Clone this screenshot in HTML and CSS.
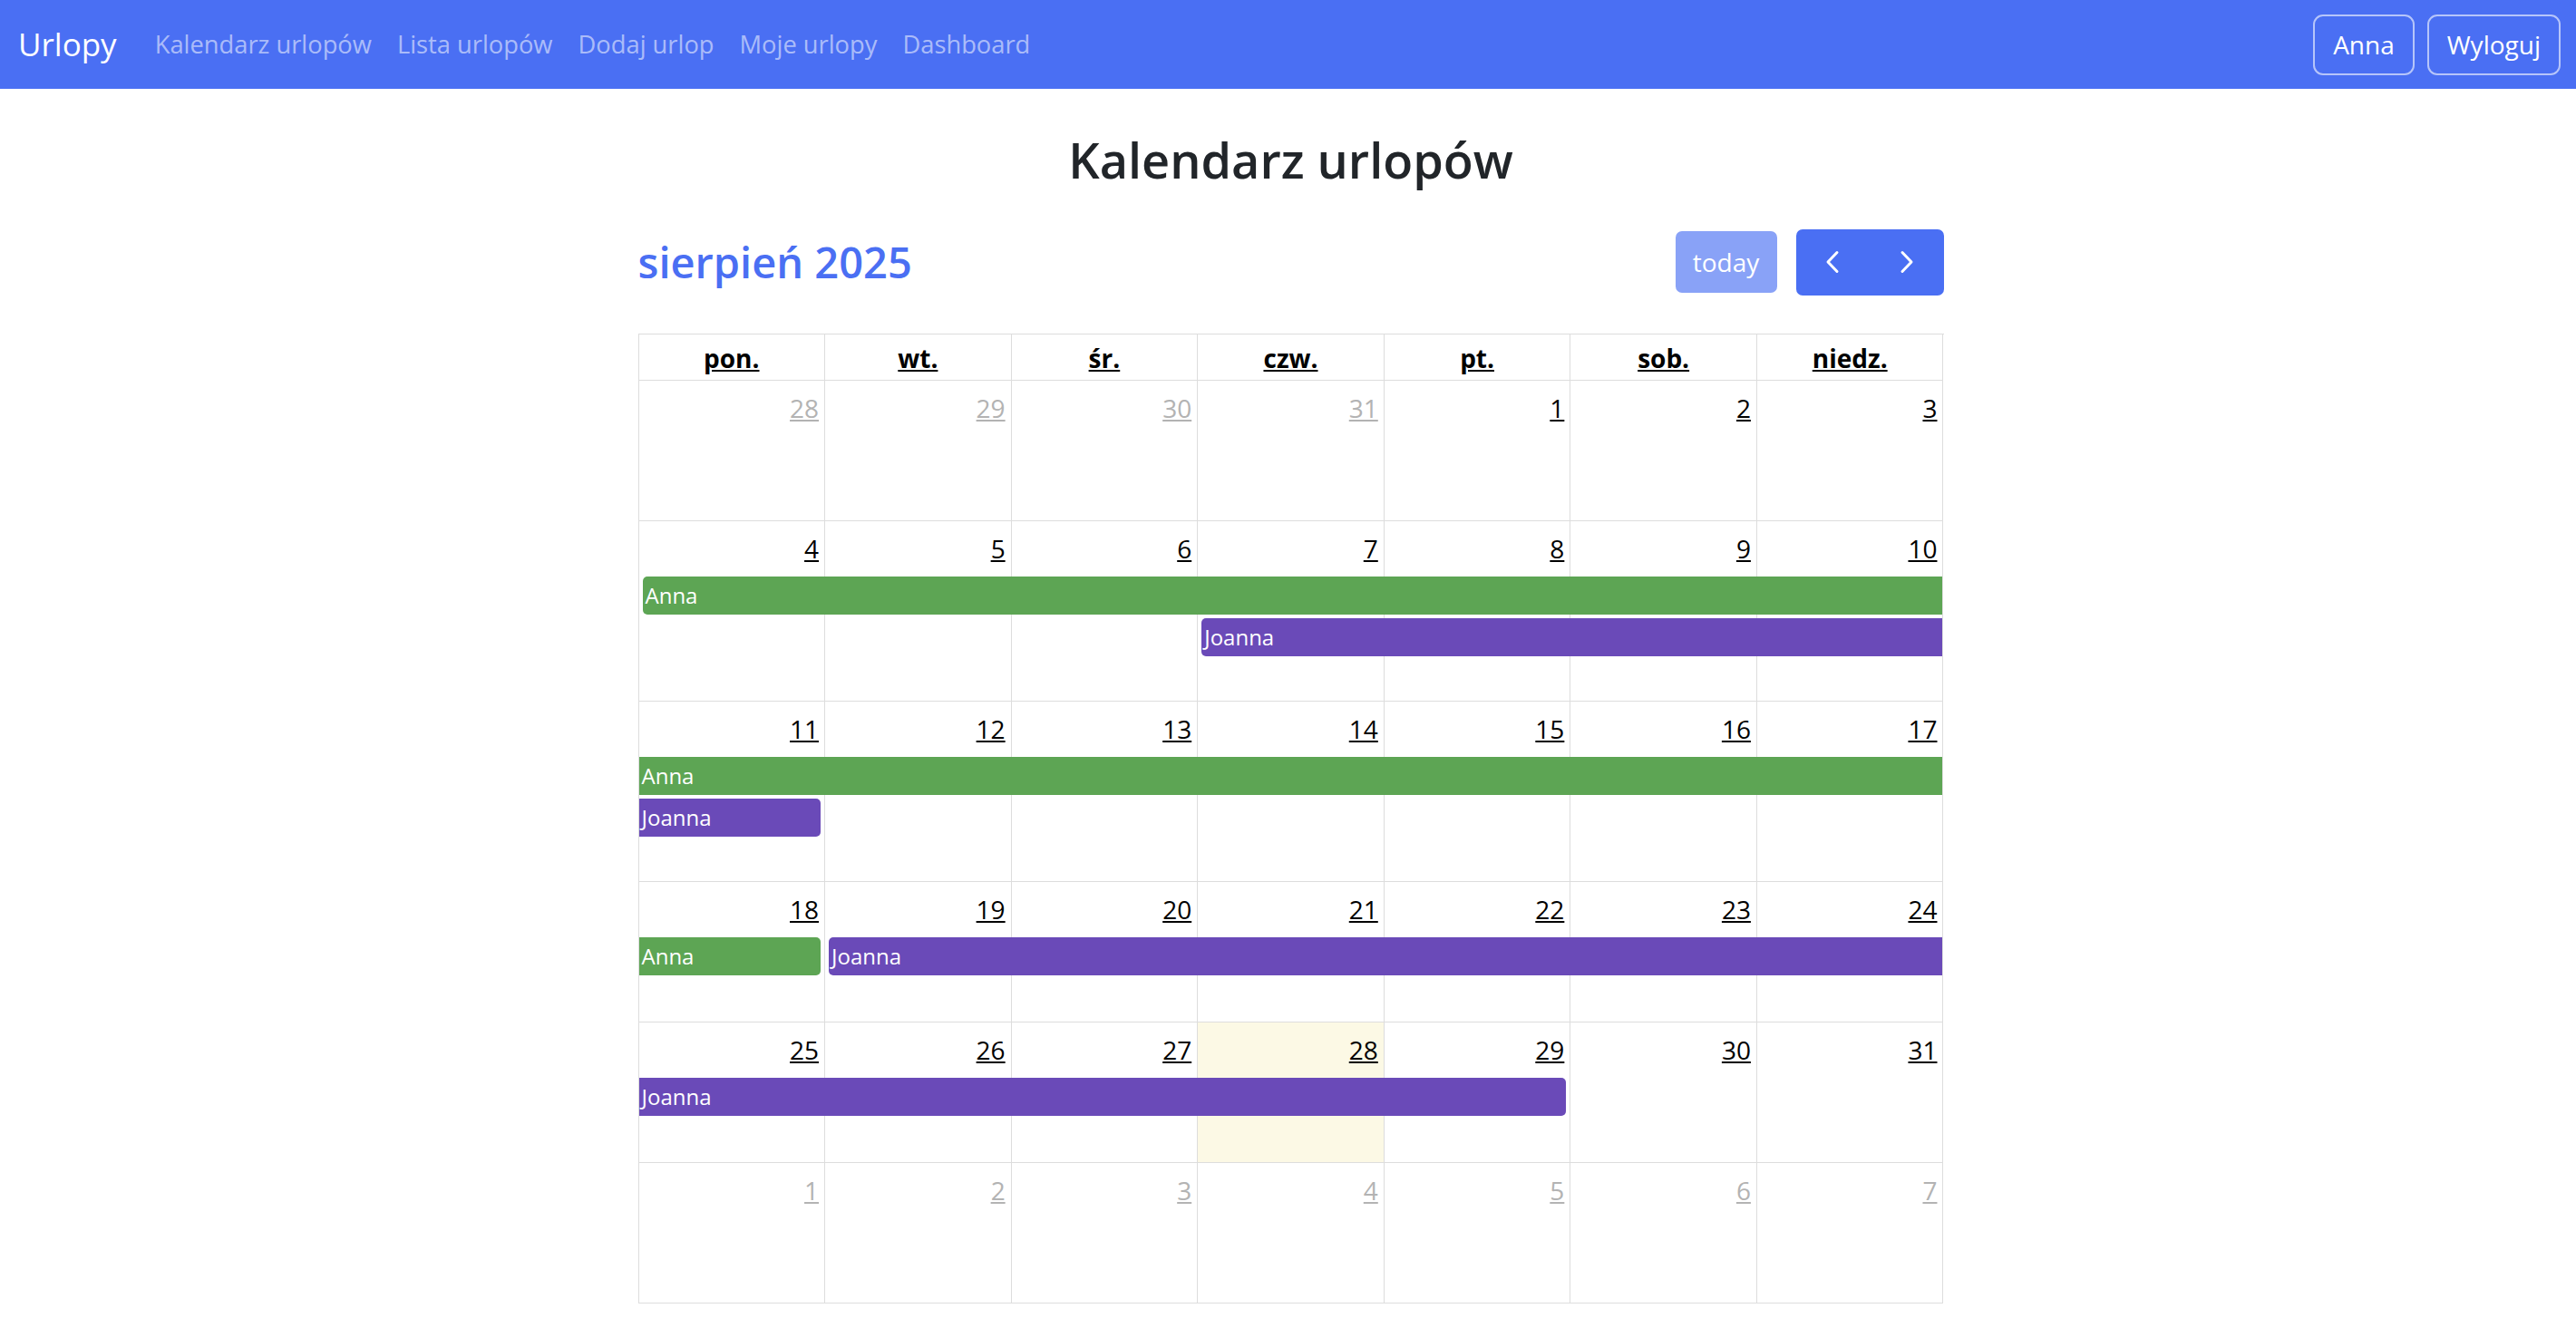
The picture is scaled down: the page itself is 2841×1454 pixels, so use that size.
FILE: index.html
```html
<!DOCTYPE html>
<html lang="pl">
<head>
<meta charset="utf-8">
<title>Kalendarz urlopów</title>
<link rel="stylesheet" href="styles.css">
</head>
<body>
<nav class="navbar">
  <div class="nav-left">
    <a class="brand" href="#">Urlopy</a>
    <ul class="nav-links">
      <li><a href="#">Kalendarz urlopów</a></li>
      <li><a href="#">Lista urlopów</a></li>
      <li><a href="#">Dodaj urlop</a></li>
      <li><a href="#">Moje urlopy</a></li>
      <li><a href="#">Dashboard</a></li>
    </ul>
  </div>
  <div class="nav-right">
    <button class="btn-outline">Anna</button>
    <button class="btn-outline">Wyloguj</button>
  </div>
</nav>

<main class="page">
  <h2 class="page-title">Kalendarz urlopów</h2>
  <div class="calendar">
    <div class="toolbar">
      <h2 class="cal-title">sierpień 2025</h2>
      <div class="toolbar-right">
        <button class="today-btn">today</button>
        <div class="btn-group">
          <button class="arrow-btn" aria-label="prev">
            <svg class="chev" viewBox="0 0 16 26"><polyline points="13,2.5 3,13 13,23.5"/></svg>
          </button>
          <button class="arrow-btn" aria-label="next">
            <svg class="chev" viewBox="0 0 16 26"><polyline points="3,2.5 13,13 3,23.5"/></svg>
          </button>
        </div>
      </div>
    </div>

    <div class="cal-grid">
      <div class="head-row">
        <div class="head-cell"><a href="#">pon.</a></div>
        <div class="head-cell"><a href="#">wt.</a></div>
        <div class="head-cell"><a href="#">śr.</a></div>
        <div class="head-cell"><a href="#">czw.</a></div>
        <div class="head-cell"><a href="#">pt.</a></div>
        <div class="head-cell"><a href="#">sob.</a></div>
        <div class="head-cell"><a href="#">niedz.</a></div>
      </div>

      <div class="week">
        <div class="bg c1"></div><div class="bg c2"></div><div class="bg c3"></div><div class="bg c4"></div><div class="bg c5"></div><div class="bg c6"></div><div class="bg c7"></div>
        <a class="num other c1" href="#">28</a>
        <a class="num other c2" href="#">29</a>
        <a class="num other c3" href="#">30</a>
        <a class="num other c4" href="#">31</a>
        <a class="num c5" href="#">1</a>
        <a class="num c6" href="#">2</a>
        <a class="num c7" href="#">3</a>
      </div>

      <div class="week">
        <div class="bg c1"></div><div class="bg c2"></div><div class="bg c3"></div><div class="bg c4"></div><div class="bg c5"></div><div class="bg c6"></div><div class="bg c7"></div>
        <a class="num c1" href="#">4</a>
        <a class="num c2" href="#">5</a>
        <a class="num c3" href="#">6</a>
        <a class="num c4" href="#">7</a>
        <a class="num c5" href="#">8</a>
        <a class="num c6" href="#">9</a>
        <a class="num c7" href="#">10</a>
        <div class="ev green line-1 c1 span-7 start cont-r">Anna</div>
        <div class="ev purple line-2 c4 span-4 start cont-r">Joanna</div>
      </div>

      <div class="week">
        <div class="bg c1"></div><div class="bg c2"></div><div class="bg c3"></div><div class="bg c4"></div><div class="bg c5"></div><div class="bg c6"></div><div class="bg c7"></div>
        <a class="num c1" href="#">11</a>
        <a class="num c2" href="#">12</a>
        <a class="num c3" href="#">13</a>
        <a class="num c4" href="#">14</a>
        <a class="num c5" href="#">15</a>
        <a class="num c6" href="#">16</a>
        <a class="num c7" href="#">17</a>
        <div class="ev green line-1 c1 span-7 cont-r">Anna</div>
        <div class="ev purple line-2 c1 span-1 end">Joanna</div>
      </div>

      <div class="week">
        <div class="bg c1"></div><div class="bg c2"></div><div class="bg c3"></div><div class="bg c4"></div><div class="bg c5"></div><div class="bg c6"></div><div class="bg c7"></div>
        <a class="num c1" href="#">18</a>
        <a class="num c2" href="#">19</a>
        <a class="num c3" href="#">20</a>
        <a class="num c4" href="#">21</a>
        <a class="num c5" href="#">22</a>
        <a class="num c6" href="#">23</a>
        <a class="num c7" href="#">24</a>
        <div class="ev green line-1 c1 span-1 end">Anna</div>
        <div class="ev purple line-1 c2 span-6 start cont-r">Joanna</div>
      </div>

      <div class="week">
        <div class="bg c1"></div><div class="bg c2"></div><div class="bg c3"></div><div class="bg c4 today"></div><div class="bg c5"></div><div class="bg c6"></div><div class="bg c7"></div>
        <a class="num c1" href="#">25</a>
        <a class="num c2" href="#">26</a>
        <a class="num c3" href="#">27</a>
        <a class="num c4" href="#">28</a>
        <a class="num c5" href="#">29</a>
        <a class="num c6" href="#">30</a>
        <a class="num c7" href="#">31</a>
        <div class="ev purple line-1 c1 span-5 end">Joanna</div>
      </div>

      <div class="week">
        <div class="bg c1"></div><div class="bg c2"></div><div class="bg c3"></div><div class="bg c4"></div><div class="bg c5"></div><div class="bg c6"></div><div class="bg c7"></div>
        <a class="num other c1" href="#">1</a>
        <a class="num other c2" href="#">2</a>
        <a class="num other c3" href="#">3</a>
        <a class="num other c4" href="#">4</a>
        <a class="num other c5" href="#">5</a>
        <a class="num other c6" href="#">6</a>
        <a class="num other c7" href="#">7</a>
      </div>
    </div>
  </div>
</main>
</body>
</html>
```

FILE: styles.css
```css
* { box-sizing: border-box; }

html, body { margin: 0; padding: 0; }

body {
  font-family: "Open Sans", "Noto Sans", "Liberation Sans", sans-serif;
  font-size: 28px;
  line-height: 1.5;
  color: #212529;
  background: #ffffff;
}

/* ---------- navbar ---------- */
.navbar {
  display: flex;
  align-items: center;
  justify-content: space-between;
  height: 98px;
  padding: 0 17px 0 20px;
  background: #4a6ff3;
}

.nav-left {
  display: flex;
  align-items: center;
}

.brand {
  color: #ffffff;
  font-size: 35px;
  text-decoration: none;
  margin-right: 28px;
}

.nav-links {
  display: flex;
  list-style: none;
  margin: 0;
  padding: 0;
}

.nav-links a {
  display: block;
  padding: 0 14px;
  font-size: 27.3px;
  color: rgba(255, 255, 255, 0.55);
  text-decoration: none;
}

.nav-right {
  display: flex;
  gap: 14px;
}

.btn-outline {
  font: inherit;
  color: #ffffff;
  background: transparent;
  border: 2px solid rgba(255, 255, 255, 0.6);
  border-radius: 11px;
  height: 67px;
  padding: 0 20px;
}

/* ---------- page ---------- */
.page {
  width: 1446px;
  margin: 0 auto;
  padding-left: 6px;
}

.page-title {
  margin: 46px 0 0;
  font-size: 54px;
  font-weight: 600;
  line-height: 1.2;
  text-align: center;
  color: #212529;
}

.toolbar {
  display: flex;
  align-items: center;
  justify-content: space-between;
  height: 73px;
  margin: 44px 0 42px;
}

.cal-title {
  margin: 0;
  font-size: 47px;
  font-weight: 600;
  line-height: 1.2;
  color: #4a6ff3;
}

.toolbar-right {
  display: flex;
  align-items: center;
  gap: 21px;
}

.today-btn {
  font: inherit;
  width: 112px;
  height: 68px;
  padding: 0;
  color: #ffffff;
  background: #89a2f7;
  border: none;
  border-radius: 7px;
}

.btn-group {
  display: flex;
  background: #4a6ff3;
  border-radius: 7px;
  overflow: hidden;
}

.arrow-btn {
  display: flex;
  align-items: center;
  justify-content: center;
  width: 81.5px;
  height: 73px;
  padding: 0;
  background: transparent;
  border: none;
}

.chev {
  width: 16px;
  height: 26px;
  fill: none;
  stroke: #ffffff;
  stroke-width: 3;
  stroke-linecap: round;
  stroke-linejoin: round;
}

/* ---------- grid ---------- */
.cal-grid {
  border-left: 1px solid #dddddd;
  border-top: 1px solid #dddddd;
}

.head-row {
  display: grid;
  grid-template-columns: repeat(7, 1fr);
}

.head-cell {
  height: 51px;
  padding-top: 5px;
  text-align: center;
  font-weight: 700;
  border-right: 1px solid #dddddd;
  border-bottom: 1px solid #dddddd;
}

.head-cell a {
  color: #000000;
  text-decoration: underline;
}

.week {
  display: grid;
  grid-template-columns: repeat(7, 1fr);
  grid-template-rows: 61px auto auto minmax(46px, 1fr);
  min-height: 155px;
}

.bg {
  grid-row: 1 / -1;
  border-right: 1px solid #dddddd;
  border-bottom: 1px solid #dddddd;
}

.bg.today { background: #fcf9e5; }

.num {
  grid-row: 1;
  justify-self: end;
  align-self: start;
  margin: 9px 7px 0 0;
  color: #000000;
  text-decoration: underline;
}

.num.other { color: #b3b3b3; }

.c1 { grid-column-start: 1; }
.c2 { grid-column-start: 2; }
.c3 { grid-column-start: 3; }
.c4 { grid-column-start: 4; }
.c5 { grid-column-start: 5; }
.c6 { grid-column-start: 6; }
.c7 { grid-column-start: 7; }

.span-1 { grid-column-end: span 1; }
.span-4 { grid-column-end: span 4; }
.span-5 { grid-column-end: span 5; }
.span-6 { grid-column-end: span 6; }
.span-7 { grid-column-end: span 7; }

.line-1 { grid-row: 2; }
.line-2 { grid-row: 3; }

.ev {
  height: 42px;
  margin-bottom: 4px;
  padding: 0 3px;
  font-size: 24px;
  line-height: 42px;
  color: #ffffff;
  white-space: nowrap;
  overflow: hidden;
}

.ev.green { background: #5da554; }
.ev.purple { background: #6a4ab8; }

.ev.start {
  margin-left: 4px;
  border-top-left-radius: 5px;
  border-bottom-left-radius: 5px;
}

.ev.end {
  margin-right: 5px;
  border-top-right-radius: 5px;
  border-bottom-right-radius: 5px;
}

.ev.cont-r { margin-right: 1px; }
```
